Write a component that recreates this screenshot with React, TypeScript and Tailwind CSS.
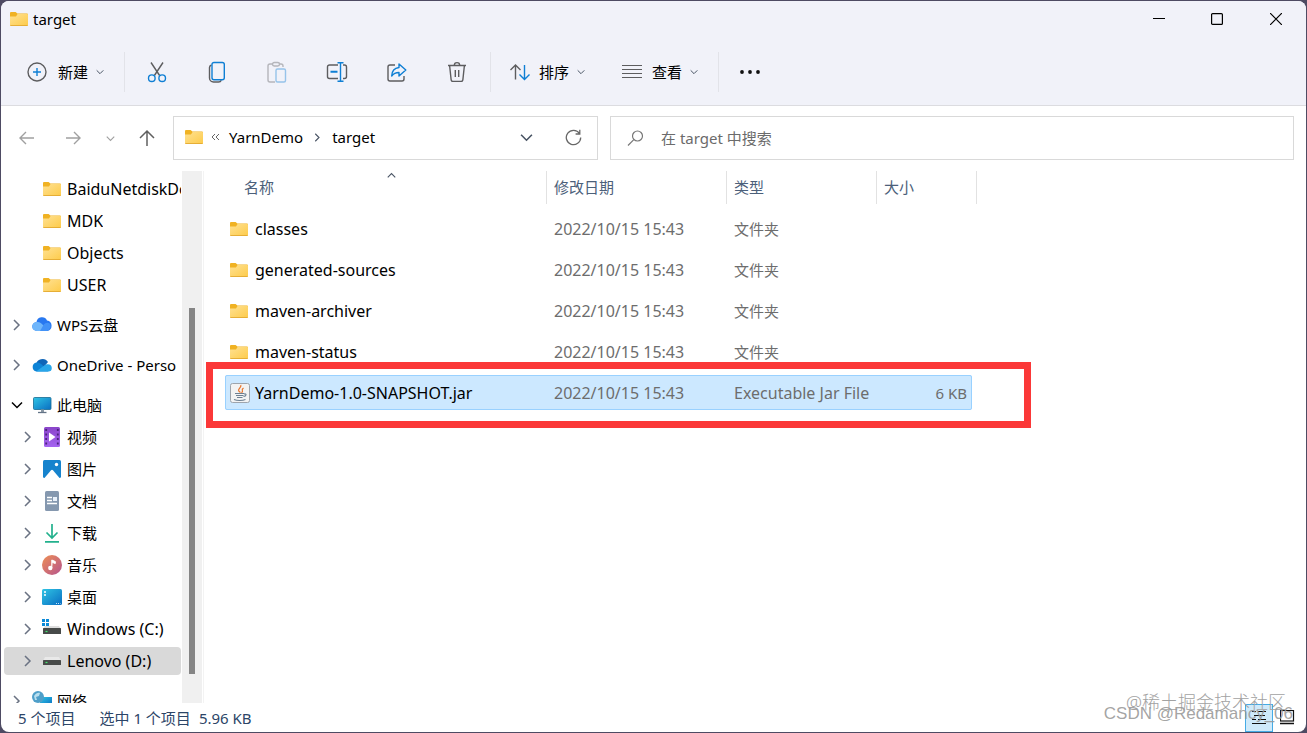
import type { ReactNode } from "react";

type Tone = { className?: string };

function Folder() {
  return (
    <svg width="18" height="14" viewBox="0 0 18 14" className="shrink-0">
      <defs>
        <linearGradient id="folder" x1="0" y1="0" x2="1" y2="1">
          <stop offset="0" stopColor="#ffe192" />
          <stop offset="1" stopColor="#fdcb4a" />
        </linearGradient>
      </defs>
      <path d="M0 1a1 1 0 0 1 1-1h4.600l1.800 1.500H17a1 1 0 0 1 1 1V8H0z" fill="#f0b223" />
      <path d="M0 4.400h6L7.600 2H17.200a.8.8 0 0 1 .8.8V13a1 1 0 0 1-1 1H1a1 1 0 0 1-1-1z" fill="url(#folder)" />
      <path d="M.3 13.500h17.400" stroke="#dfa52c" strokeWidth="0.8" />
    </svg>
  );
}

function Chevron({ dir, className = "" }: { dir: "right" | "down" | "up"; className?: string }) {
  const paths = { right: "M3 1l5 5-5 5", down: "M1 3.5l5 5 5-5", up: "M1 8.5l5-5 5 5" };
  return (
    <svg viewBox="0 0 12 12" fill="none" stroke="currentColor" strokeWidth="1.5" className={`shrink-0 ${className}`}>
      <path d={paths[dir]} />
    </svg>
  );
}

function Svg({ children, className = "" }: { children: ReactNode } & Tone) {
  return (
    <svg width="22" height="22" viewBox="0 0 22 22" fill="none" stroke="#5d5d5f" strokeWidth="1.4" className={`shrink-0 ${className}`}>
      {children}
    </svg>
  );
}

const BLUE = "#0f7fd4";

const icons = {
  add: (
    <Svg>
      <circle cx="11" cy="11" r="9" />
      <path d="M11 7v8M7 11h8" stroke={BLUE} />
    </Svg>
  ),
  cut: (
    <Svg>
      <path d="M5 1.500L13.600 14.500M17 1.500L8.400 14.500" />
      <circle cx="5.800" cy="17.200" r="3.300" stroke={BLUE} />
      <circle cx="16.200" cy="17.200" r="3.300" stroke={BLUE} />
    </Svg>
  ),
  copy: (
    <Svg>
      <path d="M5.500 4C4 4.400 3.500 5.300 3.500 6.500V17a4 4 0 0 0 4 4h5c1.400 0 2.300-.6 2.800-1.800" />
      <rect x="6" y="1.500" width="12.300" height="17.300" rx="2" stroke={BLUE} />
    </Svg>
  ),
  paste: (
    <Svg className="opacity-40">
      <path d="M7 3H4a2 2 0 0 0-2 2v14a2 2 0 0 0 2 2h5M13 3h2a2 2 0 0 1 2 2v1" />
      <rect x="6.500" y="1.500" width="7" height="3.500" rx="1.700" />
      <rect x="10" y="8" width="9.500" height="13" rx="1.500" stroke={BLUE} />
    </Svg>
  ),
  rename: (
    <Svg>
      <path d="M12 4H3.500a2 2 0 0 0-2 2v9.500a2 2 0 0 0 2 2H12M17 4h1.500a2 2 0 0 1 2 2v9.500a2 2 0 0 1-2 2H17" />
      <path d="M14.500 1.700v18.600M11.500 1.700h6M11.500 20.300h6" stroke={BLUE} />
      <path d="M4.500 10.800h7" stroke={BLUE} strokeWidth="2" />
    </Svg>
  ),
  share: (
    <Svg>
      <path d="M9 4H4a2 2 0 0 0-2 2v12a2 2 0 0 0 2 2h12a2 2 0 0 0 2-2v-3" />
      <path d="M13 3l6.800 6-6.800 6v-3.500c-3.500 0-5.500 1-7.300 3.500.2-5 2.900-8 7.300-8.500z" stroke={BLUE} strokeLinejoin="round" />
    </Svg>
  ),
  trash: (
    <Svg>
      <path d="M2 4.500h18M3.600 4.500l1.500 14a2 2 0 0 0 2 1.900h7.800a2 2 0 0 0 2-1.900l1.500-14M8.300 4.300a2.700 2.700 0 0 1 5.400 0M9.300 9v7M12.700 9v7" />
    </Svg>
  ),
  sort: (
    <Svg>
      <path d="M6.500 18.500V4M1.500 9l5-5 5 5" />
      <path d="M15.500 4v14.500M10.500 13.500l5 5 5-5" stroke={BLUE} />
    </Svg>
  ),
  view: (
    <Svg>
      <path d="M1 4.500h20M1 8.500h20M1 12.500h20M1 16.500h20" strokeWidth="1.200" />
    </Svg>
  ),
  more: (
    <Svg>
      <g fill="#111" stroke="none">
        <circle cx="3" cy="11" r="1.900" />
        <circle cx="11" cy="11" r="1.900" />
        <circle cx="19" cy="11" r="1.900" />
      </g>
    </Svg>
  ),
};

function Art({ children }: { children: ReactNode }) {
  return (
    <svg width="20" height="20" viewBox="0 0 20 20" className="shrink-0">
      <defs>
        <linearGradient id="blue" x1="0" y1="0" x2="1" y2="1">
          <stop offset="0" stopColor="#2fc4e4" />
          <stop offset="1" stopColor="#0a6ec2" />
        </linearGradient>
        <linearGradient id="purple" x1="0" y1="0" x2="0" y2="1">
          <stop offset="0" stopColor="#8a45c9" />
          <stop offset="1" stopColor="#a463f0" />
        </linearGradient>
        <linearGradient id="music" x1="0" y1="0" x2="1" y2="1">
          <stop offset="0" stopColor="#ee8f54" />
          <stop offset="1" stopColor="#b5548f" />
        </linearGradient>
      </defs>
      {children}
    </svg>
  );
}

const art = {
  wps: (
    <Art>
      <path d="M5 16a4.500 4.500 0 0 1-.5-9 5.500 5.500 0 0 1 10.500-1.500A5.300 5.300 0 0 1 15 16z" fill="#2878f0" />
      <path d="M4.500 7c3-.5 5 1 6.500 3l4 6H5A4.500 4.500 0 0 1 4.500 7z" fill="#6fb6fb" />
      <path d="M8 16l3.500-6c1.500-2.200 4-2.800 6-1.700A5 5 0 0 1 15 16z" fill="#4292f7" />
    </Art>
  ),
  onedrive: (
    <Art>
      <path d="M4 10a6.500 6.500 0 0 1 12-3l-6 7z" fill="#0f65b8" />
      <path d="M4.500 16.500A4.500 4.500 0 0 1 4.500 7.600c2-.1 3 .5 5 1.700l7 7.200z" fill="#0d83d6" />
      <path d="M4 16.500l8-5.700c4-3 7.800-1 7.800 2.200a3.500 3.500 0 0 1-3.500 3.500z" fill="#29a6e9" />
    </Art>
  ),
  pc: (
    <Art>
      <rect x="1.500" y="2.500" width="17.500" height="12" rx="1" fill="url(#blue)" stroke="#176b92" strokeWidth="0.800" />
      <path d="M9 14.500h3V17H9z" fill="#8b98a5" />
      <path d="M6 17.500h8.500" stroke="#637487" strokeWidth="1.300" />
    </Art>
  ),
  video: (
    <Art>
      <rect x="2" y="0" width="16" height="20" rx="1.500" fill="url(#purple)" />
      <path d="M4.200 2v17M15.800 2v17" stroke="#4b237c" strokeWidth="1.800" strokeDasharray="2 2.500" />
      <path d="M7 5.500l6.500 4.500L7 14.500z" fill="#fff" />
    </Art>
  ),
  picture: (
    <Art>
      <rect x="1" y="1" width="18" height="18" rx="1.500" fill="#1683cd" />
      <path d="M2.500 19L9 11.200a1.400 1.400 0 0 1 2 0L17.500 19z" fill="#fff" />
      <circle cx="14.500" cy="5.500" r="1.700" fill="#fff" />
    </Art>
  ),
  document: (
    <Art>
      <rect x="3" y="0" width="14" height="20" rx="1.500" fill="#8598af" />
      <path d="M5 6.500h5M5 9.500h5M5 12.500h10" stroke="#fff" strokeWidth="1.300" />
      <path d="M11 6h4v4h-4z" fill="#e9f1fa" />
    </Art>
  ),
  download: (
    <Art>
      <path d="M10 1v14M4.500 9.500L10 15l5.500-5.500M3 18.800h14" fill="none" stroke="#23b18d" strokeWidth="1.700" />
    </Art>
  ),
  music: (
    <Art>
      <circle cx="10" cy="10" r="10" fill="url(#music)" />
      <circle cx="8.300" cy="13" r="2.200" fill="#fff" />
      <path d="M9.800 13V5l3.500 1.500v2L10.500 7.500" fill="#fff" stroke="#fff" strokeWidth="1" />
    </Art>
  ),
  desktop: (
    <Art>
      <rect x="0" y="2" width="20" height="16" rx="1.500" fill="url(#blue)" />
      <path d="M2 5h2M2 8h2" stroke="#fff" strokeWidth="1.600" />
      <path d="M14 16.500h4.500" stroke="#c7e7fa" strokeWidth="1" strokeDasharray="1 1" />
    </Art>
  ),
  windows: (
    <Art>
      <path d="M3 7h14l2 3H1z" fill="#dedede" />
      <path d="M0 0h3v3H0zM4 0h3v3H4zM0 4h3v3H0zM4 4h3v3H4z" fill="#0c8ad8" />
      <rect x="1" y="9" width="18" height="6" rx="0.500" fill="#474a49" />
      <path d="M3.500 12.500h2" stroke="#45e56f" strokeWidth="1.200" />
    </Art>
  ),
  drive: (
    <Art>
      <path d="M3 6h14l2 4H1z" fill="#e9e9e9" />
      <rect x="1" y="9" width="18" height="5" rx="0.500" fill="#474a49" />
      <path d="M3.500 11.500h2" stroke="#45e56f" strokeWidth="1.200" />
    </Art>
  ),
  network: (
    <Art>
      <rect x="8" y="6" width="12" height="9" fill="url(#blue)" />
      <circle cx="6" cy="6" r="6" fill="#4f9fc9" />
      <path d="M2 5c2-3 4-3.500 6-3l-1 3-3 1 1 3H3z" fill="#b9dfef" />
      <path d="M5 17h12" stroke="#637487" strokeWidth="1.300" />
    </Art>
  ),
};

function Jar() {
  return (
    <svg width="20" height="20" viewBox="0 0 20 20" fill="none" className="shrink-0">
      <rect x="0.500" y="0.500" width="19" height="19" rx="2" fill="#f3f3f3" stroke="#9da4ac" />
      <path d="M10.500 9.500C5.500 6.500 12 5 10.800 2M11.500 10c3-2.500-1.500-2.500 2-5" stroke="#e8742a" strokeWidth="1.200" />
      <path d="M5 10.500h9M6 12.500h7.500M7 14.500h5.500M14 11c3-.7 2.500 2-.5 2.500M4 16.500c3 1.300 8.500 1.300 11.500 0" stroke="#6d8092" strokeWidth="1.100" />
    </svg>
  );
}

const quickFolders = ["BaiduNetdiskDo", "MDK", "Objects", "USER"];

const drives = [
  { name: "视频", icon: art.video },
  { name: "图片", icon: art.picture },
  { name: "文档", icon: art.document },
  { name: "下载", icon: art.download },
  { name: "音乐", icon: art.music },
  { name: "桌面", icon: art.desktop },
  { name: "Windows (C:)", icon: art.windows, latin: true },
  { name: "Lenovo (D:)", icon: art.drive, latin: true, active: true },
];

const files = [
  { name: "classes", type: "文件夹" },
  { name: "generated-sources", type: "文件夹" },
  { name: "maven-archiver", type: "文件夹" },
  { name: "maven-status", type: "文件夹" },
  { name: "YarnDemo-1.0-SNAPSHOT.jar", type: "Executable Jar File", size: "6 KB", selected: true },
];

function RootItem({ name, icon, open }: { name: string; icon: ReactNode; open?: boolean }) {
  return (
    <button className="mt-2 flex h-8 w-full shrink-0 items-center pl-[10px] text-left">
      <Chevron dir={open ? "down" : "right"} className={open ? "mr-[9px] size-3 text-black" : "mr-[9px] size-3 text-gray-500"} />
      {icon}
      <span className="ml-[5px] overflow-hidden whitespace-nowrap">{name}</span>
    </button>
  );
}

function Sidebar() {
  return (
    <aside className="flex w-[203px] shrink-0 overflow-hidden border-r border-[#f3f3f3]">
      <nav className="flex min-w-0 flex-1 flex-col overflow-hidden pt-[2px]">
        {quickFolders.map((name) => (
          <button key={name} className="flex h-8 shrink-0 items-center pl-[42px] text-left text-[16px]">
            <Folder />
            <span className="ml-[6px] overflow-hidden whitespace-nowrap">{name}</span>
          </button>
        ))}
        <RootItem name="WPS云盘" icon={art.wps} />
        <RootItem name="OneDrive - Perso" icon={art.onedrive} />
        <RootItem name="此电脑" icon={art.pc} open />
        {drives.map((d) => (
          <button
            key={d.name}
            className={`my-[2px] ml-[3px] flex h-7 shrink-0 items-center rounded-sm pl-[18px] text-left ${d.active ? "bg-[#d9d9d9]" : ""}`}
          >
            <Chevron dir="right" className="mr-2 size-3 text-gray-500" />
            {d.icon}
            <span className={`ml-[5px] whitespace-nowrap ${d.latin ? "text-[16px]" : ""}`}>{d.name}</span>
          </button>
        ))}
        <RootItem name="网络" icon={art.network} />
      </nav>
      {/* Scrollbar */}
      <div className="mr-px ml-px w-5 shrink-0 bg-[#f0f0f0] pt-[137px]">
        <div className="mx-auto h-[366px] w-[6px] bg-[#858585]" />
      </div>
    </aside>
  );
}

function FileTable() {
  return (
    <table className="block text-[15px] text-[#6d6d6d]">
      <thead className="block">
        <tr className="grid h-[34px] grid-cols-[322px_180px_150px_100px] text-[#4c607a]">
          {["名称", "修改日期", "类型", "大小"].map((label, i) => (
            <th
              key={label}
              className={`relative mb-px flex items-center border-r border-[#e2e2e2] pb-px text-left font-normal ${i === 0 ? "pl-[19px]" : "pl-[7px]"}`}
            >
              {label}
              {i === 0 && <Chevron dir="up" className="absolute top-0 left-[162px] size-[9px] text-gray-600" />}
            </th>
          ))}
        </tr>
      </thead>
      <tbody className="flex flex-col gap-[6px] pt-[6px]">
        {files.map((f) => (
          <tr
            key={f.name}
            className={`relative grid h-[35px] w-[747px] grid-cols-[322px_180px_150px_95px] items-center rounded-xs ${f.selected ? "bg-[#cce8ff] outline outline-1 -outline-offset-1 outline-[#99d1ff]" : ""}`}
          >
            <td className="flex items-center text-[16px] text-black">
              <span className="flex w-[30px] shrink-0 pl-[5px]">{f.selected ? <Jar /> : <Folder />}</span>
              {f.name}
            </td>
            <td className="pl-[7px] text-[16px]">2022/10/15 15:43</td>
            <td className={f.selected ? "pl-[7px] text-[16px]" : "pl-[7px]"}>{f.type}</td>
            <td className="pr-[5px] text-right">
              {f.size}
              {f.selected && (
                <span className="pointer-events-none absolute -top-[13px] -right-[59px] -bottom-[18px] -left-[19px] border-7 border-[#fb3838]" />
              )}
            </td>
          </tr>
        ))}
      </tbody>
    </table>
  );
}

export default function App() {
  return (
    <div className="h-screen bg-[#4e4b63] p-px font-['Noto_Sans','Noto_Sans_CJK_SC',sans-serif] text-[15px] leading-5 text-black">
      <div className="relative flex h-full flex-col overflow-hidden rounded-lg bg-white">
        {/* Title bar and commands */}
        <header className="border-b border-[#dcdce0] bg-[#f1f2f9]">
          <div className="flex h-9 items-center justify-between pl-[9px]">
            <h1 className="flex items-center gap-[5px]">
              <Folder />
              target
            </h1>
            <div className="flex text-black">
              <button aria-label="最小化" className="flex h-9 w-[58px] items-center justify-center">
                <svg width="12" height="12" stroke="currentColor"><path d="M0 5.500h12" /></svg>
              </button>
              <button aria-label="最大化" className="flex h-9 w-[58px] items-center justify-center">
                <svg width="12" height="12" fill="none" stroke="currentColor" strokeWidth="1.200"><rect x="0.600" y="0.600" width="10.800" height="10.800" rx="1" /></svg>
              </button>
              <button aria-label="关闭" className="flex h-9 w-[60px] items-center justify-center">
                <svg width="12" height="12" stroke="currentColor" strokeWidth="1.200"><path d="M0 0l12 12M12 0L0 12" /></svg>
              </button>
            </div>
          </div>
          <div className="flex h-[68px] items-center pt-[2px]">
            <button className="flex items-center pl-[25px]">
              {icons.add}
              <span className="mr-2 ml-[10px]">新建</span>
              <Chevron dir="down" className="size-2 text-gray-600" />
            </button>
            <div className="mr-[21px] ml-5 h-10 w-px bg-[#e2e3e9]" />
            <div className="flex gap-[38px]">
              <button aria-label="剪切">{icons.cut}</button>
              <button aria-label="复制">{icons.copy}</button>
              <button aria-label="粘贴">{icons.paste}</button>
              <button aria-label="重命名">{icons.rename}</button>
              <button aria-label="共享">{icons.share}</button>
              <button aria-label="删除">{icons.trash}</button>
            </div>
            <div className="mr-[18px] ml-[22px] h-10 w-px bg-[#e2e3e9]" />
            <button className="mr-9 flex items-center">
              {icons.sort}
              <span className="mr-2 ml-2">排序</span>
              <Chevron dir="down" className="size-2 text-gray-600" />
            </button>
            <button className="flex items-center">
              {icons.view}
              <span className="mr-2 ml-[9px]">查看</span>
              <Chevron dir="down" className="size-2 text-gray-600" />
            </button>
            <div className="mx-5 h-10 w-px bg-[#e2e3e9]" />
            <button aria-label="更多">{icons.more}</button>
          </div>
        </header>

        {/* Address bar */}
        <div className="flex h-[65px] shrink-0 items-center pr-3 pb-px">
          <div className="flex w-[172px] shrink-0 items-center pl-[18px] text-[#a0a0a0]">
            <button aria-label="后退">
              <svg width="16" height="16" fill="none" stroke="currentColor" strokeWidth="1.400"><path d="M15 8H1M7 2L1 8l6 6" /></svg>
            </button>
            <button aria-label="前进" className="ml-[30px]">
              <svg width="16" height="16" fill="none" stroke="currentColor" strokeWidth="1.400"><path d="M1 8h14M9 2l6 6-6 6" /></svg>
            </button>
            <button aria-label="最近位置" className="ml-[25px]">
              <Chevron dir="down" className="size-[9px]" />
            </button>
            <button aria-label="向上" className="ml-6 text-[#5f5f5f]">
              <svg width="16" height="18" fill="none" stroke="currentColor" strokeWidth="1.500"><path d="M8 17V2M1 9l7-7 7 7" /></svg>
            </button>
          </div>
          <div className="mr-3 flex h-11 w-[425px] shrink-0 items-center border border-[#d9d9d9] pb-[2px] pl-[11px]">
            <Folder />
            <svg width="9" height="8" fill="none" stroke="#666" className="ml-2"><path d="M4 1L1 4l3 3M8 1L5 4l3 3" /></svg>
            <a href="#yarndemo" className="ml-[9px]">YarnDemo</a>
            <Chevron dir="right" className="mx-[10px] size-[9px] text-gray-600" />
            <a href="#target">target</a>
            <button aria-label="展开" className="mr-8 ml-auto">
              <Chevron dir="down" className="size-[13px] text-gray-600" />
            </button>
            <button aria-label="刷新" className="mr-[15px]">
              <svg width="17" height="17" fill="none" stroke="#686868" strokeWidth="1.300"><path d="M14.500 4.500A7.200 7.200 0 1 0 15.700 8.500M14.800.8v4.200h-4.200" /></svg>
            </button>
          </div>
          <label className="flex h-11 min-w-0 flex-1 items-center border border-[#d9d9d9] pl-4">
            <svg width="17" height="17" fill="none" stroke="#777" strokeWidth="1.200"><circle cx="10.500" cy="6" r="5" /><path d="M6.800 9.700L1 15.500" /></svg>
            <input
              aria-label="搜索"
              placeholder="在 target 中搜索"
              className="ml-[17px] min-w-0 flex-1 bg-transparent outline-none placeholder:text-[#6b6b6b]"
            />
          </label>
        </div>

        <div className="flex min-h-0 flex-1">
          <Sidebar />
          <main className="min-w-0 flex-1 overflow-hidden pl-[21px]">
            <FileTable />
          </main>
        </div>

        {/* Status bar */}
        <footer className="flex h-[29px] shrink-0 items-center pr-[11px] pl-[17px] text-[#2c4567]">
          <span>5 个项目</span>
          <span className="ml-6">选中 1 个项目</span>
          <span className="ml-2">5.96 KB</span>
          <button aria-label="详细信息" className="ml-auto flex size-7 items-center justify-center border border-[#45abe5] bg-[#cfeafa]">
            <svg width="14" height="16" fill="none" stroke="#111"><path d="M0 1.500h4M6 1.500h8M2 5.500h11M0 9.500h4M6 9.500h8M0 13.500h14" /></svg>
          </button>
          <button aria-label="大图标" className="ml-[7px]">
            <svg width="15" height="15" fill="none" stroke="#111"><rect x="0.500" y="0.500" width="13" height="10.500" strokeWidth="1.200" /><path d="M0 13.500h14" strokeWidth="1.300" /></svg>
          </button>
        </footer>

        {/* Watermarks */}
        <p className="pointer-events-none absolute right-5 bottom-5 text-[18px] leading-5 font-light text-[#a2a2a2]">@稀土掘金技术社区</p>
        <p className="pointer-events-none absolute right-[13px] bottom-2 font-['Liberation_Sans',sans-serif] text-[17px] leading-5 text-[#999999]/90">
          CSDN @Redamancy_06
        </p>
      </div>
    </div>
  );
}
